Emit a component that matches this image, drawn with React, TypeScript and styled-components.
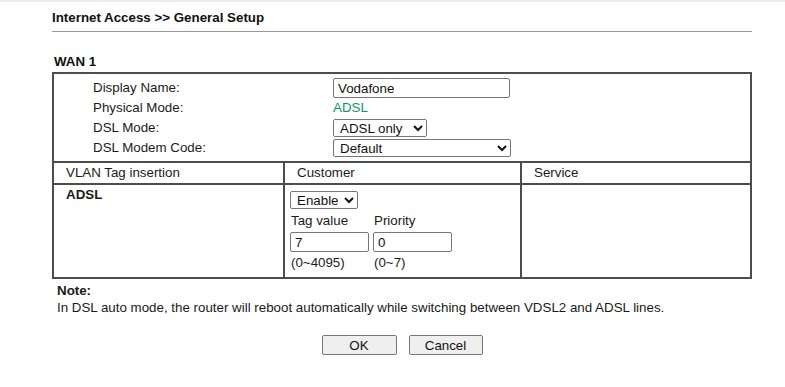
import React from "react";
import styled, { createGlobalStyle } from "styled-components";

const Global = createGlobalStyle`
  html, body { margin: 0; padding: 0; background: #fff; }
  body { font-family: "Liberation Sans", Arial, sans-serif; font-size: 13.333px; color: #1a1a1a; }
`;

const TopStrip = styled.div`
  height: 2px;
  background: #ececec;
`;

const Page = styled.div`
  width: 700px;
  margin-left: 52px;
`;

const Title = styled.div`
  margin-top: 8px;
  font-weight: bold;
  line-height: 16px;
  color: #111;
`;

const Rule = styled.div`
  margin-top: 5px;
  height: 1px;
  background: #9a9a9a;
`;

const Section = styled.div`
  margin-top: 22px;
  padding-left: 2px;
  font-weight: bold;
  line-height: 16px;
  color: #111;
`;

const Frame = styled.div`
  margin-top: 2px;
  border: 2px solid #4d4d4d;
  background: #4d4d4d;
  display: flex;
  flex-direction: column;
  gap: 2px;
`;

const TopPanel = styled.div`
  background: #fff;
  padding: 4px 0 3px 39px;
  display: grid;
  grid-template-columns: 240px 1fr;
  grid-auto-rows: 20px;
  align-items: center;
`;

const Label = styled.div`
  line-height: 16px;
`;

const Value = styled.div<{ $green?: boolean }>`
  display: flex;
  align-items: center;
  line-height: 16px;
  color: ${(p) => (p.$green ? "#0b9a5e" : "inherit")};
`;

const TextInput = styled.input<{ $w: number }>`
  box-sizing: border-box;
  width: ${(p) => p.$w}px;
  height: 20px;
  border: 1px solid #767676;
  border-radius: 2px;
  padding: 0 4px;
  font-family: "Liberation Sans", Arial, sans-serif;
  font-size: 13.333px;
  color: #111;
  background: #fff;
`;

const Select = styled.select<{ $w: number }>`
  box-sizing: border-box;
  width: ${(p) => p.$w}px;
  height: 18px;
  border: 1px solid #767676;
  border-radius: 2px;
  padding: 0 0 0 2px;
  font-family: "Liberation Sans", Arial, sans-serif;
  font-size: 13.333px;
  color: #111;
  background: #fff;
`;

const Grid = styled.div`
  display: grid;
  grid-template-columns: 229px 235px 1fr;
  grid-template-rows: 20px 92px;
  gap: 2px;
`;

const HeadCell = styled.div`
  background: #fff;
  line-height: 20px;
  padding-left: 12px;
`;

const BodyCell = styled.div<{ $bold?: boolean }>`
  background: #fff;
  padding: 2px 0 0 12px;
  font-weight: ${(p) => (p.$bold ? "bold" : "normal")};
  line-height: 16px;
`;

const CustomerCell = styled.div`
  background: #fff;
  padding: 6px 0 0 5px;
  display: grid;
  grid-template-columns: 83px 80px;
  grid-template-rows: 18px 23px 20px 22px;
  align-items: center;
`;

const SelectSlot = styled.div`
  grid-column: 1 / 3;
  display: flex;
`;

const SubLabel = styled.div`
  padding-left: 1px;
  line-height: 16px;
`;

const EmptyCell = styled.div`
  background: #fff;
`;

const Note = styled.div`
  margin-top: 3px;
  padding-left: 5px;
  line-height: 17px;
`;

const NoteTitle = styled.div`
  font-weight: bold;
`;

const Buttons = styled.div`
  margin-top: 19px;
  display: flex;
  justify-content: center;
  gap: 12px;
`;

const Button = styled.button<{ $w: number }>`
  box-sizing: border-box;
  width: ${(p) => p.$w}px;
  height: 20px;
  border: 1px solid #767676;
  border-radius: 2px;
  background: #efefef;
  font-family: "Liberation Sans", Arial, sans-serif;
  font-size: 13.333px;
  color: #111;
  padding: 0;
`;

export default function App() {
  return (
    <>
      <Global />
      <TopStrip />
      <Page>
        <Title>Internet Access &gt;&gt; General Setup</Title>
        <Rule />
        <Section>WAN 1</Section>
        <Frame>
          <TopPanel>
            <Label>Display Name:</Label>
            <Value>
              <TextInput $w={177} defaultValue="Vodafone" />
            </Value>
            <Label>Physical Mode:</Label>
            <Value $green>ADSL</Value>
            <Label>DSL Mode:</Label>
            <Value>
              <Select $w={94} defaultValue="adsl">
                <option value="adsl">ADSL only</option>
              </Select>
            </Value>
            <Label>DSL Modem Code:</Label>
            <Value>
              <Select $w={178} defaultValue="default">
                <option value="default">Default</option>
              </Select>
            </Value>
          </TopPanel>
          <Grid>
            <HeadCell>VLAN Tag insertion</HeadCell>
            <HeadCell>Customer</HeadCell>
            <HeadCell>Service</HeadCell>
            <BodyCell $bold>ADSL</BodyCell>
            <CustomerCell>
              <SelectSlot>
                <Select $w={68} defaultValue="en">
                  <option value="en">Enable</option>
                </Select>
              </SelectSlot>
              <SubLabel>Tag value</SubLabel>
              <SubLabel>Priority</SubLabel>
              <TextInput $w={79} defaultValue="7" />
              <TextInput $w={79} defaultValue="0" />
              <SubLabel>(0~4095)</SubLabel>
              <SubLabel>(0~7)</SubLabel>
            </CustomerCell>
            <EmptyCell />
          </Grid>
        </Frame>
        <Note>
          <NoteTitle>Note:</NoteTitle>
          <div>In DSL auto mode, the router will reboot automatically while switching between VDSL2 and ADSL lines.</div>
        </Note>
        <Buttons>
          <Button $w={75}>OK</Button>
          <Button $w={74}>Cancel</Button>
        </Buttons>
      </Page>
    </>
  );
}
